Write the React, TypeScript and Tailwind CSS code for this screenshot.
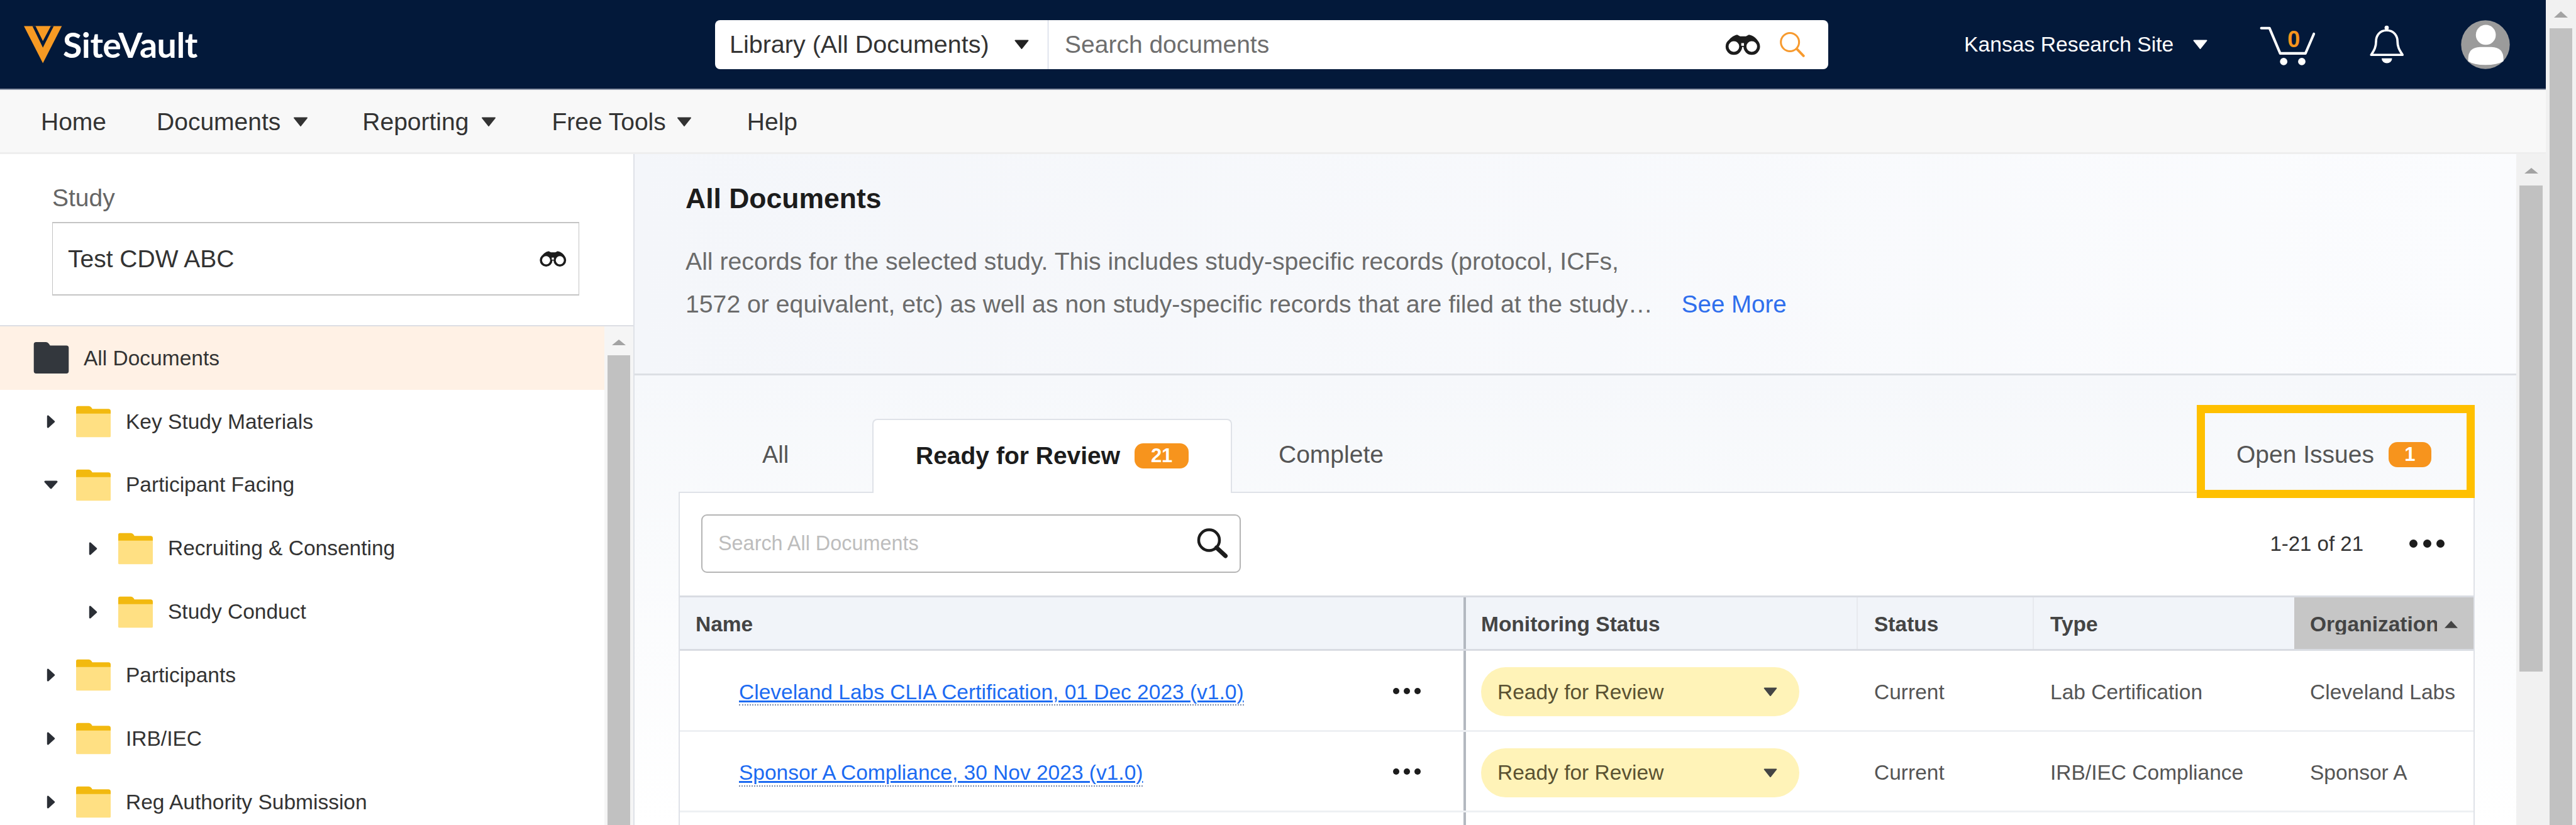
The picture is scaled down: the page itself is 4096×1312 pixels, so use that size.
const tree = [
  { label: "Key Study Materials", level: 0, open: false },
  { label: "Participant Facing", level: 0, open: true },
  { label: "Recruiting & Consenting", level: 1, open: false },
  { label: "Study Conduct", level: 1, open: false },
  { label: "Participants", level: 0, open: false },
  { label: "IRB/IEC", level: 0, open: false },
  { label: "Reg Authority Submission", level: 0, open: false },
];

const rows = [
  { name: "Cleveland Labs CLIA Certification, 01 Dec 2023 (v1.0)", type: "Lab Certification", org: "Cleveland Labs" },
  { name: "Sponsor A Compliance, 30 Nov 2023 (v1.0)", type: "IRB/IEC Compliance", org: "Sponsor A" },
];

function CaretDown({ className }: { className: string }) {
  return (
    <svg viewBox="0 0 24 15" className={className}>
      <path d="M2 1.5h20L12 14z" fill="currentColor" stroke="currentColor" strokeWidth="2" strokeLinejoin="round" />
    </svg>
  );
}

function CaretUp({ className }: { className: string }) {
  return (
    <svg viewBox="0 0 24 12" preserveAspectRatio="none" className={className}>
      <path d="M12 1l11 10H1z" fill="currentColor" />
    </svg>
  );
}

function Binoculars({ className }: { className: string }) {
  return (
    <svg viewBox="85 80 190 110" className={className}>
      <path d="M100 125 C112 100 130 88 150 84 L165 92 L195 92 L210 84 C232 88 250 100 262 125 L200 135 L160 135Z" fill="#1c1c1c" />
      <circle cx="133" cy="145" r="35" fill="#fff" stroke="#1c1c1c" strokeWidth="15" />
      <circle cx="225" cy="145" r="35" fill="#fff" stroke="#1c1c1c" strokeWidth="15" />
      <rect x="168" y="124" width="20" height="20" fill="#fff" stroke="#1c1c1c" strokeWidth="6" />
    </svg>
  );
}

function Logo() {
  return (
    <svg viewBox="62 55 198 195" className="h-[60px] w-[61px] shrink-0">
      <path d="M62 57H258L160 248Z" fill="#f79a23" />
      <path d="M106 57H216L160 168Z" fill="#03193a" />
      <path d="M122 57H201L160 134Z" fill="#f79a23" />
    </svg>
  );
}

function Cart() {
  return (
    <div className="relative ml-[82px] mt-[4px] h-[65px] w-[90px] shrink-0">
      <svg viewBox="60 70 290 210" className="h-full w-full">
        <path d="M68 85H110L165 215H295L338 115" fill="none" stroke="#fff" strokeWidth="13" strokeLinecap="round" strokeLinejoin="round" />
        <circle cx="183" cy="257" r="19" fill="#fff" />
        <circle cx="276" cy="257" r="19" fill="#fff" />
      </svg>
      <span className="absolute left-[44px] top-[5px] text-[36px] leading-[35px] font-bold text-[#f7941d]">0</span>
    </div>
  );
}

function Bell() {
  return (
    <svg viewBox="620 65 190 205" className="ml-[84px] h-[63px] w-[59px] shrink-0">
      <circle cx="710" cy="82" r="11" fill="#fff" />
      <path
        d="M710 95C672 95 655 125 655 152C655 186 642 202 630 222H792C780 202 766 186 766 152C766 125 748 95 710 95Z"
        fill="none"
        stroke="#fff"
        strokeWidth="12"
        strokeLinejoin="round"
      />
      <path d="M684 240H738A27 25 0 0 1 684 240Z" fill="#fff" />
    </svg>
  );
}

function Avatar() {
  return (
    <svg viewBox="1090 38 256 256" className="ml-[87px] h-[78px] w-[78px] shrink-0">
      <circle cx="1218" cy="166" r="127" fill="#9b9b9b" />
      <circle cx="1220" cy="115" r="52" fill="#fff" />
      <path d="M1128 240Q1128 180 1190 178H1250Q1312 180 1312 240V252Q1280 272 1218 272Q1156 272 1128 252Z" fill="#fff" />
    </svg>
  );
}

function Folder({ dark }: { dark?: boolean }) {
  if (dark) {
    return (
      <svg viewBox="0 0 60 54" className="h-[50px] w-[57px] shrink-0">
        <path d="M4 0H21Q24 0 26 3L28 6H56Q60 6 60 10V50Q60 54 56 54H4Q0 54 0 50V4Q0 0 4 0Z" fill="#33373d" />
      </svg>
    );
  }
  return (
    <svg viewBox="0 0 60 54" className="h-[51px] w-[55px] shrink-0">
      <path d="M0 12H60V52Q60 54 58 54H2Q0 54 0 52Z" fill="#ffe083" />
      <path d="M0 3Q0 0 3 0H22Q25 0 27 3L28 5H56Q60 5 60 9V13H0Z" fill="#f2b90f" />
    </svg>
  );
}

function TreeRow({ label, level, open }: { label: string; level: number; open: boolean }) {
  return (
    <div className={`flex h-[100.9px] shrink-0 items-center ${level === 1 ? "pl-[141px]" : "pl-[74px]"}`}>
      <div className="flex w-[47px] shrink-0 items-center">
        {open ? (
          <svg viewBox="0 0 22 14" className="-ml-[4px] h-[14px] w-[22px] text-[#2b2f36]">
            <path d="M2 2H20L11 12Z" fill="currentColor" stroke="currentColor" strokeWidth="3" strokeLinejoin="round" />
          </svg>
        ) : (
          <svg viewBox="0 0 14 22" className="h-[21px] w-[14px] text-[#2b2f36]">
            <path d="M2 2L12 11L2 20Z" fill="currentColor" stroke="currentColor" strokeWidth="3" strokeLinejoin="round" />
          </svg>
        )}
      </div>
      <Folder />
      <span className="ml-[24px] text-[33.5px] leading-none text-[#333]">{label}</span>
    </div>
  );
}

function Dots({ className }: { className: string }) {
  return (
    <div className={`flex shrink-0 items-center justify-between ${className}`}>
      <span className="h-[1em] w-[1em] rounded-full bg-[#1c1c1c]" />
      <span className="h-[1em] w-[1em] rounded-full bg-[#1c1c1c]" />
      <span className="h-[1em] w-[1em] rounded-full bg-[#1c1c1c]" />
    </div>
  );
}

function Badge({ value, className }: { value: string; className: string }) {
  return (
    <span className={`flex h-[40px] items-center justify-center rounded-[14px] bg-[#f7941d] text-[31px] font-bold leading-none text-white ${className}`}>
      {value}
    </span>
  );
}

export default function App() {
  return (
    <div className="flex h-[1312px] w-[4096px] overflow-hidden bg-white font-['Liberation_Sans',Arial,sans-serif] text-[#333]">
      <div className="flex w-[4048px] shrink-0 flex-col">
        <header className="flex h-[143px] shrink-0 items-center border-b-2 border-[#8d95a6] bg-[#03193a]">
          <div className="flex w-[1137px] shrink-0 items-center pl-[38px]">
            <Logo />
            <span className="ml-[1px] font-['Lato',sans-serif] text-[55.5px] font-bold leading-none tracking-[-0.5px] text-white">
              SiteVault
            </span>
          </div>

          <div className="flex h-[78px] w-[1770px] shrink-0 items-center rounded-[8px] bg-white">
            <div className="flex h-full w-[530px] shrink-0 items-center justify-between border-r border-[#c9cfe0] pl-[23px] pr-[29px]">
              <span className="text-[39.5px] leading-none text-[#333]">Library (All Documents)</span>
              <CaretDown className="h-[15px] w-[25px] text-[#222]" />
            </div>
            <div className="flex flex-1 items-center pl-[26px] pr-[36px]">
              <span className="flex-1 text-[39px] leading-none text-[#6e6e6e]">Search documents</span>
              <Binoculars className="h-[34px] w-[59px]" />
              <svg viewBox="365 60 135 130" className="ml-[28px] h-[40px] w-[42px]">
                <circle cx="420" cy="112" r="47" fill="none" stroke="#f79a2e" strokeWidth="10" />
                <path d="M458 150L490 183" stroke="#f79a2e" strokeWidth="13" strokeLinecap="round" />
              </svg>
            </div>
          </div>

          <span className="ml-[216px] text-[33.7px] leading-none text-white">Kansas Research Site</span>
          <CaretDown className="ml-[30px] h-[15px] w-[25px] text-white" />
          <Cart />
          <Bell />
          <Avatar />
        </header>

        <nav className="flex h-[102px] shrink-0 items-center border-b-[3px] border-[#eeeeee] bg-[#f8f8f8] pl-[65px] pt-[2px] text-[39px] leading-none text-[#333]">
          <span>Home</span>
          <span className="ml-[80px]">Documents</span>
          <CaretDown className="ml-[20px] h-[15px] w-[24px] text-[#333]" />
          <span className="ml-[86px]">Reporting</span>
          <CaretDown className="ml-[20px] h-[15px] w-[24px] text-[#333]" />
          <span className="ml-[88px]">Free Tools</span>
          <CaretDown className="ml-[17px] h-[15px] w-[24px] text-[#333]" />
          <span className="ml-[88px]">Help</span>
        </nav>

        <div className="flex min-h-0 flex-1">
          <aside className="flex w-[1009px] shrink-0 flex-col overflow-hidden border-r-2 border-[#dfe2e8] bg-white">
            <div className="shrink-0 border-b-2 border-[#dcdee4] pb-[47px] pl-[83px] pt-[45px]">
              <div className="text-[39px] leading-[50px] text-[#666]">Study</div>
              <div className="mt-[13px] flex h-[117px] w-[838px] items-center justify-between border border-t-2 border-b-2 border-[#c4c4c4] pl-[24px] pr-[18px]">
                <span className="text-[39px] leading-none text-[#333]">Test CDW ABC</span>
                <Binoculars className="h-[27px] w-[45px]" />
              </div>
            </div>

            <div className="flex min-h-0 flex-1">
              <div className="flex w-[961px] shrink-0 flex-col">
                <div className="flex h-[100.9px] shrink-0 items-center bg-[#fff1e5] pl-[53px]">
                  <Folder dark />
                  <span className="ml-[23px] text-[33.5px] leading-none text-[#333]">All Documents</span>
                </div>
                {tree.map((item) => (
                  <TreeRow key={item.label} {...item} />
                ))}
              </div>
              <div className="flex flex-1 flex-col items-center bg-[#f5f5f5]">
                <CaretUp className="mt-[20px] h-[11px] w-[24px] text-[#a3a3a3]" />
                <div className="mt-[15px] w-[36px] flex-1 bg-[#c1c1c1]" />
              </div>
            </div>
          </aside>

          <main className="flex w-[992px] flex-1 flex-col overflow-hidden">
            <section className="h-[352px] shrink-0 border-b-[3px] border-[#dcdfe4] bg-linear-to-r from-[#f4f6fa] to-[#fbfcfe] pl-[81px] pt-[46px]">
              <h1 className="text-[44.5px] font-bold leading-[50px] text-[#1c1c1c]">All Documents</h1>
              <p className="mt-[41px] text-[39.2px] leading-[68px] text-[#6b6b6b]">
                All records for the selected study. This includes study-specific records (protocol, ICFs,
              </p>
              <div className="flex text-[39.2px] leading-[68px] text-[#6b6b6b]">
                <span>1572 or equivalent, etc) as well as non study-specific records that are filed at the study…</span>
                <span className="ml-[46px] text-[38.5px] text-[#2f6fed]">See More</span>
              </div>
            </section>

            <section className="min-h-0 flex-1 bg-linear-to-b from-[#f6f8fb] to-white pl-[70px] pr-[66px] pt-[69px]">
              <div className="relative flex h-[116px] items-stretch">
                <div className="flex w-[308px] items-center justify-center pb-[3px] text-[38px] leading-none text-[#555]">All</div>
                <div className="relative z-[1] -mb-[2px] flex w-[572px] items-center rounded-t-[8px] border-x-2 border-t-2 border-[#dfe2e8] bg-white pb-[3px] pl-[67px]">
                  <span className="text-[39px] font-bold leading-none text-[#1c1c1c]">Ready for Review</span>
                  <Badge value="21" className="ml-[23px] w-[86px]" />
                </div>
                <div className="flex items-center pb-[3px] pl-[74px] text-[39px] leading-none text-[#555]">Complete</div>
                <div className="relative ml-auto flex w-[442px] items-center pb-[3px] pl-[63px] text-[39px] leading-none text-[#555]">
                  <span>Open Issues</span>
                  <Badge value="1" className="ml-[23px] w-[68px]" />
                  <div className="absolute -bottom-[10px] -top-[22px] left-0 right-0 z-10 border-[13px] border-[#ffc000]" />
                </div>
              </div>

              <div className="border-x-2 border-t-2 border-[#dfe2e8] bg-white">
                <div className="flex h-[163px] items-center pb-[3px] pl-[34px] pr-[46px]">
                  <div className="flex h-[93px] w-[858px] items-center justify-between rounded-[9px] border-2 border-[#b5b5b5] pl-[25px] pr-[17px]">
                    <span className="text-[32.4px] leading-none text-[#bdbdbd]">Search All Documents</span>
                    <svg viewBox="0 0 52 50" className="h-[50px] w-[53px]">
                      <circle cx="21" cy="20" r="16.5" fill="none" stroke="#1c1c1c" strokeWidth="4.5" />
                      <path d="M33 32L47 45" stroke="#1c1c1c" strokeWidth="7" strokeLinecap="round" />
                    </svg>
                  </div>
                  <span className="ml-auto text-[33px] leading-none text-[#333]">1-21 of 21</span>
                  <Dots className="ml-[73px] w-[56px] text-[13px]" />
                </div>

                <div className="grid h-[88px] grid-cols-[1246px_625px_280px_416px_1fr] border-y-[3px] border-[#d9dce2] bg-[#f1f4f9] text-[33.5px] font-bold leading-none text-[#444]">
                  <div className="flex items-center pl-[25px] pt-[3px]">Name</div>
                  <div className="flex items-center border-l-4 border-[#b3b8c0] pl-[24px] pt-[3px]">Monitoring Status</div>
                  <div className="flex items-center border-l-2 border-[#e7e9ee] pl-[26px] pt-[3px]">Status</div>
                  <div className="flex items-center border-l-2 border-[#e7e9ee] pl-[26px] pt-[3px]">Type</div>
                  <div className="flex items-center overflow-hidden bg-[#c6c6c6] pl-[25px] pt-[3px]">
                    <span className="w-[202px] shrink-0 overflow-hidden whitespace-nowrap">Organization</span>
                    <CaretUp className="ml-[11px] h-[14px] w-[23px] shrink-0 text-[#444]" />
                  </div>
                </div>

                {rows.map((row) => (
                  <div
                    key={row.name}
                    className="grid h-[128.5px] grid-cols-[1246px_625px_280px_416px_1fr] border-b-[3px] border-[#eef0f3] text-[33.5px] leading-none text-[#555]"
                  >
                    <div className="flex items-center justify-between pl-[94px] pr-[68px] pt-[5px]">
                      <a className="mt-[5px] border-b-2 border-dotted border-[#7a8aa8] pb-[3px] text-[#1c6bf2] underline underline-offset-2">
                        {row.name}
                      </a>
                      <Dots className="-mt-[3px] w-[44px] text-[10px]" />
                    </div>
                    <div className="flex items-center border-l-4 border-[#b3b8c0] pl-[24px] pt-[5px]">
                      <div className="flex h-[78px] w-[506px] items-center justify-between rounded-full bg-[#fff3b8] pl-[26px] pr-[34px] text-[#5a5232]">
                        <span>Ready for Review</span>
                        <CaretDown className="h-[14px] w-[24px] text-[#444]" />
                      </div>
                    </div>
                    <div className="flex items-center pl-[28px] pt-[5px]">Current</div>
                    <div className="flex items-center pl-[28px] pt-[5px]">{row.type}</div>
                    <div className="flex items-center pl-[25px] pt-[5px]">{row.org}</div>
                  </div>
                ))}

                <div className="grid h-[40px] grid-cols-[1246px_1fr]">
                  <div />
                  <div className="border-l-4 border-[#b3b8c0]" />
                </div>
              </div>
            </section>
          </main>

          <div className="flex w-[47px] shrink-0 flex-col items-center bg-[#f1f1f1]">
            <CaretUp className="mt-[21px] h-[11px] w-[24px] text-[#a3a3a3]" />
            <div className="mt-[18px] h-[773px] w-[37px] bg-[#c1c1c1]" />
          </div>
        </div>
      </div>

      <div className="flex flex-1 flex-col bg-[#f1f1f1] px-[6px]">
        <CaretUp className="mx-auto mt-[17px] h-[12px] w-[24px] shrink-0 text-[#a3a3a3]" />
        <div className="mt-[16px] flex-1 bg-[#c1c1c1]" />
      </div>
    </div>
  );
}
